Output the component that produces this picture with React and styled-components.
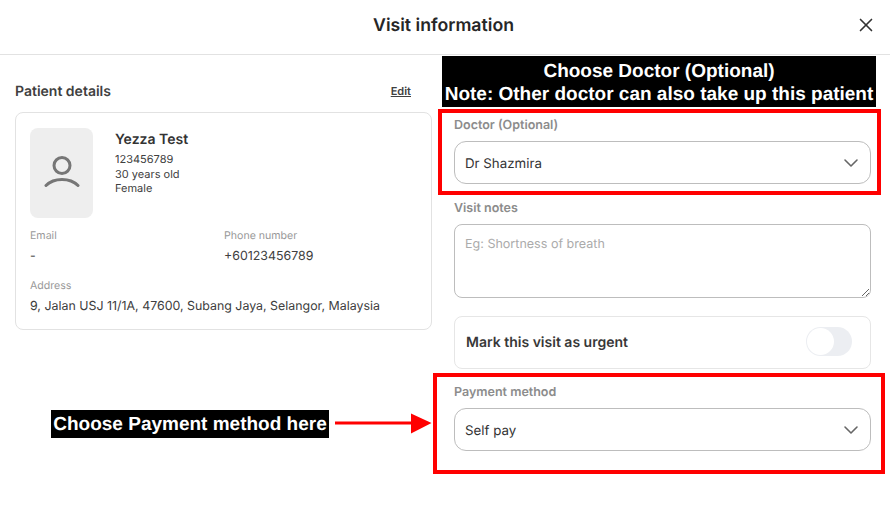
import React from "react";
import styled, { createGlobalStyle } from "styled-components";
import { ChevronDown, X } from "lucide-react";

const GlobalStyle = createGlobalStyle`
  html, body {
    margin: 0;
    padding: 0;
    background: #fff;
    font-family: Inter, "Liberation Sans", sans-serif;
    color: #333;
    text-rendering: geometricPrecision;
  }
  * {
    box-sizing: border-box;
  }
`;

const Page = styled.div`
  position: relative;
  width: 890px;
  height: 505px;
  overflow: hidden;
`;

const Header = styled.header`
  height: 55px;
  display: flex;
  align-items: center;
  justify-content: center;
  position: relative;
  padding: 0 3px 4px 0;
  border-bottom: 1px solid #e2e2e2;
`;

const Title = styled.h1`
  margin: 0;
  font-size: 17.7px;
  font-weight: 600;
  color: #262626;
`;

const CloseButton = styled.button`
  position: absolute;
  right: 13px;
  top: 14px;
  display: flex;
  padding: 0;
  border: 0;
  background: none;
  color: #333;
`;

const Body = styled.main`
  display: grid;
  grid-template-columns: 417px 417px;
  column-gap: 22px;
  padding: 0 19px 0 15px;
`;

const LeftColumn = styled.section`
  padding-top: 27px;
`;

const SectionHead = styled.div`
  display: flex;
  justify-content: space-between;
  align-items: center;
  height: 18px;
  padding-right: 21px;
  margin-bottom: 12px;
`;

const SectionTitle = styled.h2`
  margin: 0;
  font-size: 14px;
  font-weight: 600;
  color: #404040;
`;

const EditLink = styled.a`
  font-size: 11px;
  font-weight: 600;
  color: #404040;
  text-decoration: underline;
`;

const Card = styled.div`
  height: 218px;
  padding: 15px 14px;
  border: 1px solid #e2e2e2;
  border-radius: 8px;
`;

const Profile = styled.div`
  display: flex;
  gap: 22px;
`;

const Avatar = styled.div`
  width: 63px;
  height: 90px;
  display: flex;
  align-items: center;
  justify-content: center;
  background: #eeeeee;
  border-radius: 8px;
`;

const ProfileText = styled.div`
  padding-top: 3px;
`;

const PatientName = styled.div`
  font-size: 14px;
  font-weight: 600;
  line-height: 18px;
  margin-bottom: 3px;
  color: #333;
`;

const ProfileLine = styled.div`
  font-size: 11px;
  line-height: 14.5px;
  color: #404040;
`;

const InfoGrid = styled.div`
  display: grid;
  grid-template-columns: 194px 1fr;
  row-gap: 15px;
  margin-top: 11px;
`;

const InfoItem = styled.div`
  grid-column: ${(p) => (p.$wide ? "1 / -1" : "auto")};
`;

const InfoLabel = styled.div`
  font-size: 10.6px;
  line-height: 14px;
  color: #999;
  margin-bottom: 4px;
`;

const InfoValue = styled.div`
  font-size: 12.4px;
  line-height: 17px;
  color: #404040;
`;

const RightColumn = styled.section`
  padding-top: 62px;
`;

const Field = styled.div`
  margin-bottom: ${(p) => p.$gap || 0}px;
`;

const FieldLabel = styled.label`
  display: block;
  font-size: 12.5px;
  font-weight: 600;
  line-height: 18px;
  margin-bottom: 6px;
  color: #8c8c8c;
`;

const Select = styled.div`
  height: 43px;
  display: flex;
  align-items: center;
  justify-content: space-between;
  padding: 0 7px 0 10px;
  border: 1px solid #bdbdbd;
  border-radius: 12px;
  font-size: 13.3px;
  color: #333;
`;

const SelectValue = styled.span`
  position: relative;
  top: 1px;
`;

const Notes = styled.textarea`
  display: block;
  width: 100%;
  height: 74px;
  padding: 12px 10px;
  border: 1px solid #bdbdbd;
  border-radius: 8px;
  outline: none;
  font-family: Inter, "Liberation Sans", sans-serif;
  font-size: 12.55px;
  text-rendering: geometricPrecision;
  &::placeholder {
    color: #ababab;
  }
`;

const UrgentRow = styled.div`
  height: 53px;
  display: flex;
  align-items: center;
  justify-content: space-between;
  padding: 0 18px 0 11px;
  margin-bottom: 15px;
  border: 1px solid #e6e6e6;
  border-radius: 8px;
`;

const UrgentLabel = styled.span`
  font-size: 14px;
  font-weight: 600;
  color: #383838;
`;

const Toggle = styled.div`
  width: 46px;
  height: 29px;
  padding: 1px;
  margin-bottom: 2px;
  border-radius: 15px;
  background: #eceef2;
`;

const Knob = styled.div`
  width: 27px;
  height: 27px;
  border-radius: 50%;
  background: #fff;
`;

const RedBox = styled.div`
  position: absolute;
  left: ${(p) => p.$x}px;
  top: ${(p) => p.$y}px;
  width: ${(p) => p.$w}px;
  height: ${(p) => p.$h}px;
  border: 4px solid #ff0000;
`;

const Callout = styled.div`
  position: absolute;
  background: #000;
  color: #fff;
  font-family: "Liberation Sans", Arial, sans-serif;
  font-weight: 700;
  text-align: center;
  white-space: nowrap;
`;

const DoctorCallout = styled(Callout)`
  left: 442px;
  top: 56px;
  width: 434px;
  height: 51px;
  padding-top: 4px;
  font-size: 19px;
  line-height: 23px;
`;

const PaymentCallout = styled(Callout)`
  left: 51px;
  top: 410px;
  width: 278px;
  height: 28px;
  padding-top: 2px;
  font-size: 19px;
  line-height: 26px;
`;

const Arrow = styled.svg`
  position: absolute;
  left: 335px;
  top: 413px;
`;

const UserIcon = () => (
  <svg width="36" height="36" viewBox="0 0 36 36" fill="none" stroke="#767676" strokeWidth="3" strokeLinecap="round">
    <circle cx="18" cy="10.5" r="8" />
    <path d="M2 30.5C6 26.5 11.5 24.5 18 24.5C24.5 24.5 30 26.5 34 30.5" />
  </svg>
);

const App = () => {
  return (
    <Page>
      <GlobalStyle />
      <Header>
        <Title>Visit information</Title>
        <CloseButton>
          <X size={22} strokeWidth={1.8} />
        </CloseButton>
      </Header>
      <Body>
        <LeftColumn>
          <SectionHead>
            <SectionTitle>Patient details</SectionTitle>
            <EditLink>Edit</EditLink>
          </SectionHead>
          <Card>
            <Profile>
              <Avatar>
                <UserIcon />
              </Avatar>
              <ProfileText>
                <PatientName>Yezza Test</PatientName>
                <ProfileLine>123456789</ProfileLine>
                <ProfileLine>30 years old</ProfileLine>
                <ProfileLine>Female</ProfileLine>
              </ProfileText>
            </Profile>
            <InfoGrid>
              <InfoItem>
                <InfoLabel>Email</InfoLabel>
                <InfoValue>-</InfoValue>
              </InfoItem>
              <InfoItem>
                <InfoLabel>Phone number</InfoLabel>
                <InfoValue>+60123456789</InfoValue>
              </InfoItem>
              <InfoItem $wide>
                <InfoLabel>Address</InfoLabel>
                <InfoValue>9, Jalan USJ 11/1A, 47600, Subang Jaya, Selangor, Malaysia</InfoValue>
              </InfoItem>
            </InfoGrid>
          </Card>
        </LeftColumn>
        <RightColumn>
          <Field $gap={16}>
            <FieldLabel>Doctor (Optional)</FieldLabel>
            <Select>
              <SelectValue>Dr Shazmira</SelectValue>
              <ChevronDown size={24} strokeWidth={1.6} color="#666" />
            </Select>
          </Field>
          <Field $gap={18}>
            <FieldLabel>Visit notes</FieldLabel>
            <Notes placeholder="Eg: Shortness of breath" />
          </Field>
          <UrgentRow>
            <UrgentLabel>Mark this visit as urgent</UrgentLabel>
            <Toggle>
              <Knob />
            </Toggle>
          </UrgentRow>
          <Field>
            <FieldLabel>Payment method</FieldLabel>
            <Select>
              <SelectValue>Self pay</SelectValue>
              <ChevronDown size={24} strokeWidth={1.6} color="#666" />
            </Select>
          </Field>
        </RightColumn>
      </Body>
      <RedBox $x={438} $y={109} $w={443} $h={86} />
      <RedBox $x={433} $y={373} $w={452} $h={101} />
      <DoctorCallout>
        Choose Doctor (Optional)
        <br />
        Note: Other doctor can also take up this patient
      </DoctorCallout>
      <PaymentCallout>Choose Payment method here</PaymentCallout>
      <Arrow width="97" height="22" viewBox="0 0 97 22">
        <path d="M0 8.5H76V0.5L96.5 10L76 20.5V11.5H0Z" fill="#ff0000" />
      </Arrow>
    </Page>
  );
};

export default App;
